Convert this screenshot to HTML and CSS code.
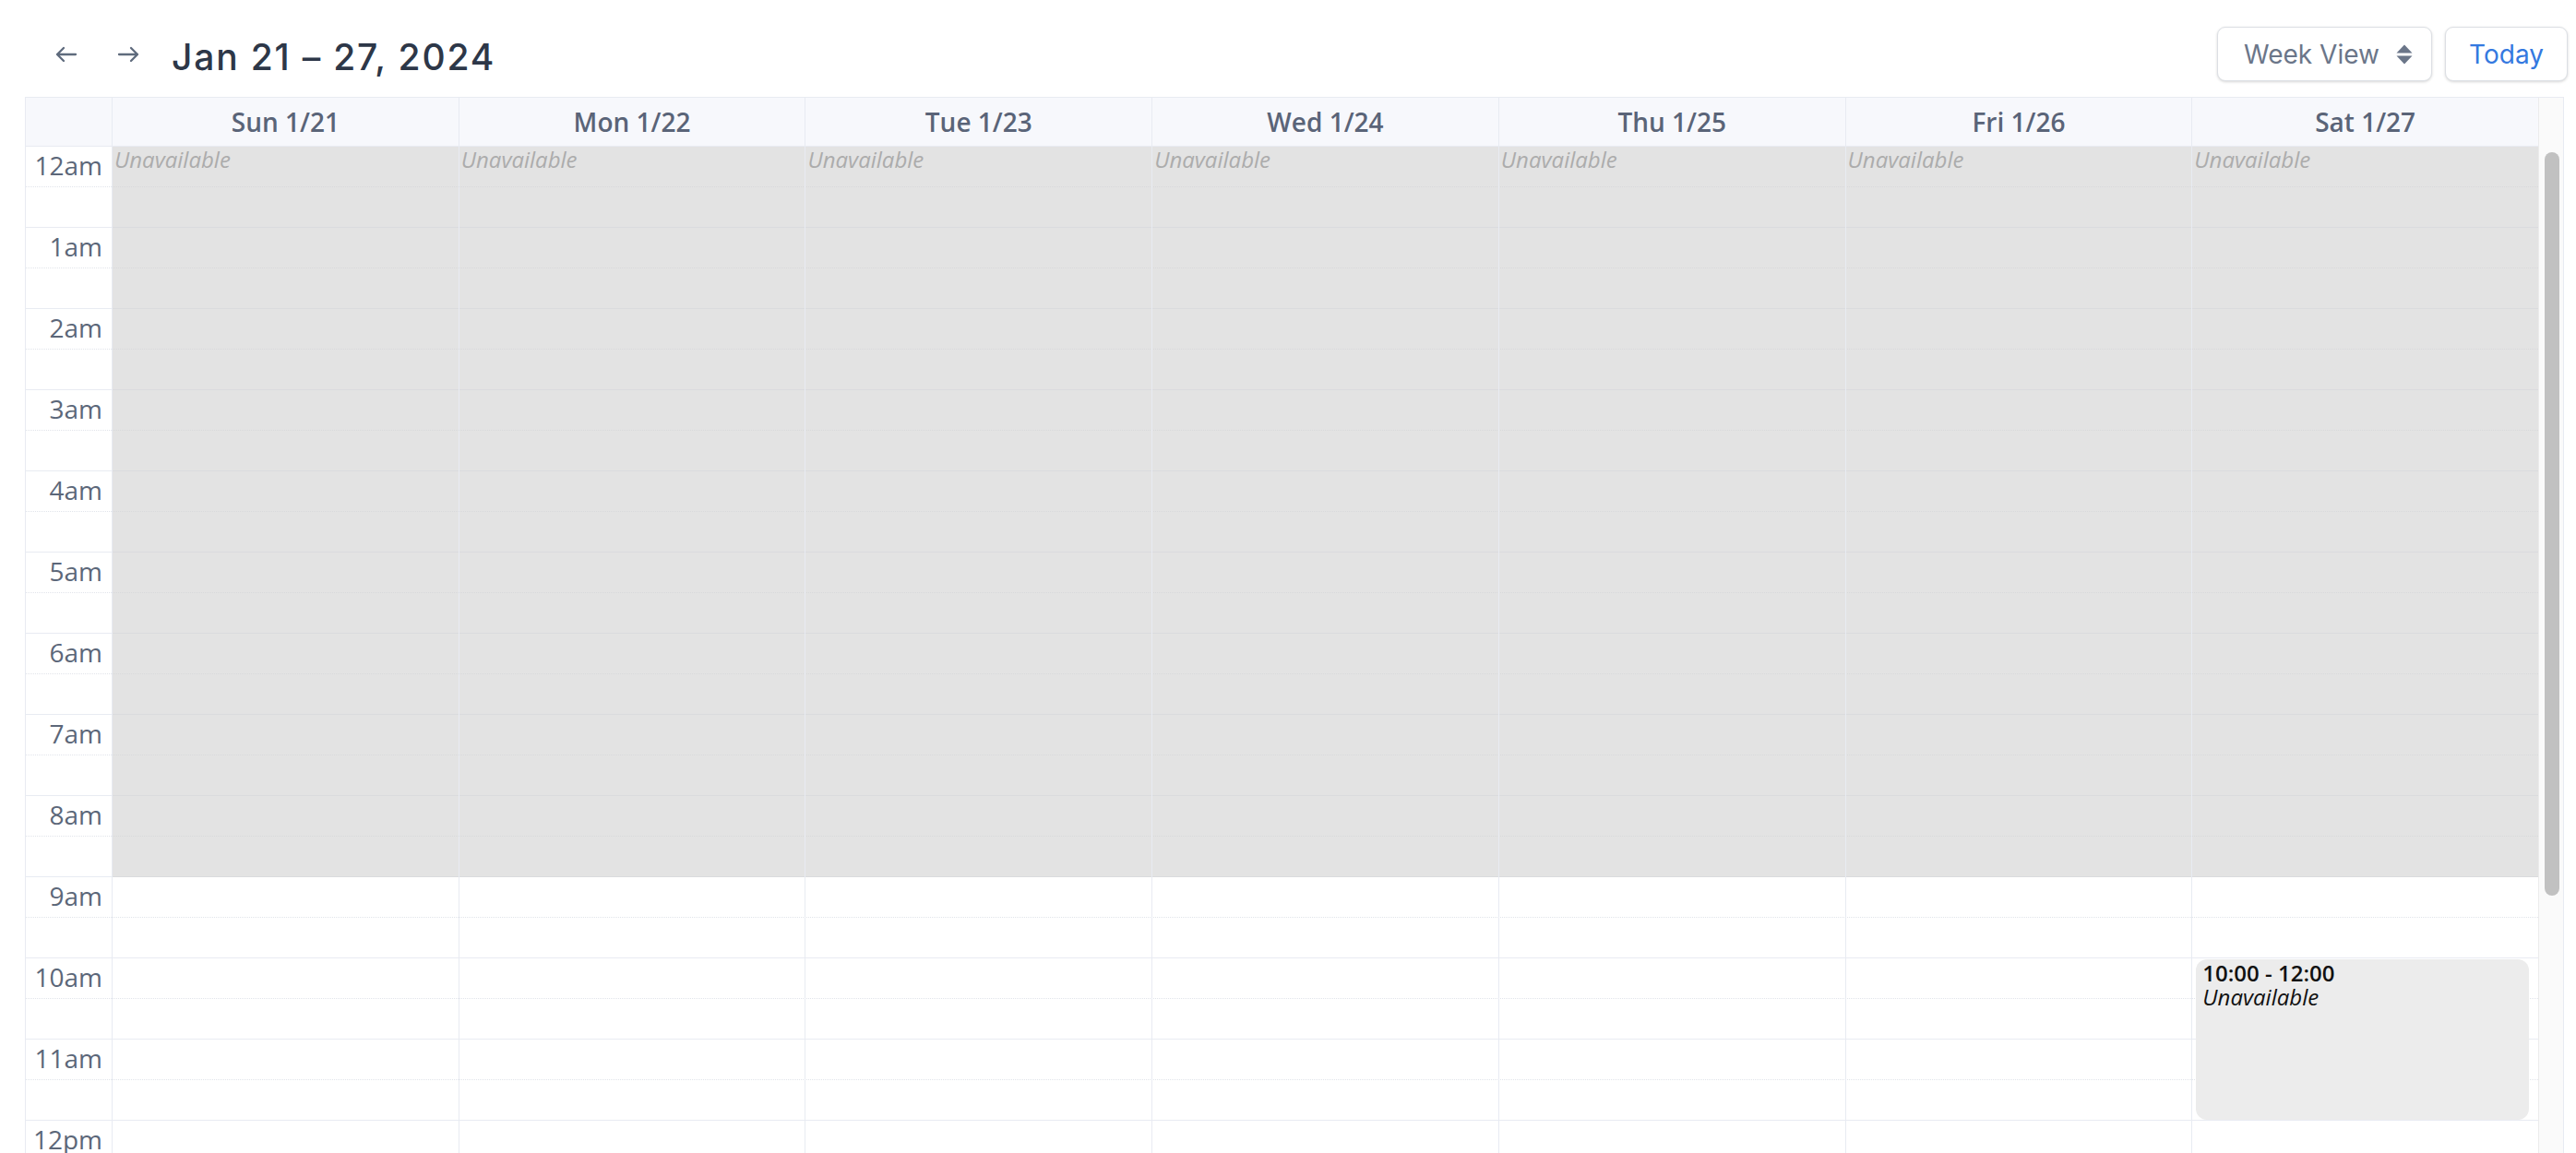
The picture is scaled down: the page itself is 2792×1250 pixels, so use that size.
FILE: index.html
```html
<!DOCTYPE html>
<html lang="en">
  <head>
    <meta charset="UTF-8" />
    <meta name="viewport" content="width=device-width, initial-scale=1.0" />
    <title>Availability – Week</title>
    <link rel="stylesheet" href="styles.css">
  </head>
  <body>
    <div class="page">
      <div class="toolbar">
        <button class="nav-btn" aria-label="Previous week">
          <svg width="26" height="20" viewBox="0 0 26 20"><path d="M23 10H3M10 3L3 10l7 7" /></svg>
        </button>
        <button class="nav-btn" aria-label="Next week">
          <svg width="26" height="20" viewBox="0 0 26 20"><path d="M3 10h20M16 3l7 7-7 7" /></svg>
        </button>
        <h1 class="title">Jan 21 – 27, 2024</h1>
        <div class="spacer"></div>
        <button class="btn view-select">
          Week View
          <svg width="18" height="22" viewBox="0 0 18 22"><path d="M9 0.5L17.5 9.5H0.5Z M0.5 12.5H17.5L9 21.5Z" /></svg>
        </button>
        <button class="btn today">Today</button>
      </div>

      <div class="calendar">
        <div class="cal-main">
          <div class="head-row">
            <div class="head-cell"></div>
            <div class="head-cell">Sun 1/21</div>
            <div class="head-cell">Mon 1/22</div>
            <div class="head-cell">Tue 1/23</div>
            <div class="head-cell">Wed 1/24</div>
            <div class="head-cell">Thu 1/25</div>
            <div class="head-cell">Fri 1/26</div>
            <div class="head-cell">Sat 1/27</div>
          </div>

          <div class="cal-body">
            <!-- hour slots, full width -->
            <div class="slots">
              <div class="hour"><div class="half"><span class="label">12am</span></div></div>
              <div class="hour"><div class="half"><span class="label">1am</span></div></div>
              <div class="hour"><div class="half"><span class="label">2am</span></div></div>
              <div class="hour"><div class="half"><span class="label">3am</span></div></div>
              <div class="hour"><div class="half"><span class="label">4am</span></div></div>
              <div class="hour"><div class="half"><span class="label">5am</span></div></div>
              <div class="hour"><div class="half"><span class="label">6am</span></div></div>
              <div class="hour"><div class="half"><span class="label">7am</span></div></div>
              <div class="hour"><div class="half"><span class="label">8am</span></div></div>
              <div class="hour"><div class="half"><span class="label">9am</span></div></div>
              <div class="hour"><div class="half"><span class="label">10am</span></div></div>
              <div class="hour"><div class="half"><span class="label">11am</span></div></div>
              <div class="hour"><div class="half"><span class="label">12pm</span></div></div>
            </div>

            <!-- unavailable background blocks -->
            <div class="bg-event d1">Unavailable</div>
            <div class="bg-event d2">Unavailable</div>
            <div class="bg-event d3">Unavailable</div>
            <div class="bg-event d4">Unavailable</div>
            <div class="bg-event d5">Unavailable</div>
            <div class="bg-event d6">Unavailable</div>
            <div class="bg-event d7">Unavailable</div>

            <!-- day columns -->
            <div class="day d1"></div>
            <div class="day d2"></div>
            <div class="day d3"></div>
            <div class="day d4"></div>
            <div class="day d5"></div>
            <div class="day d6"></div>
            <div class="day d7"></div>

            <div class="event d7">
              <div class="event-time">10:00 - 12:00</div>
              <div class="event-title">Unavailable</div>
            </div>
          </div>
        </div>

        <div class="scrollbar">
          <div class="thumb"></div>
        </div>
      </div>
    </div>
  </body>
</html>
```

FILE: styles.css
```css
html,
body {
  margin: 0;
  height: 100%;
  overflow: hidden;
  background: #fff;
}
body {
  font-family: "Open Sans", "Liberation Sans", sans-serif;
}
.page {
  height: 100vh;
  padding: 0 13px 0 27px;
  box-sizing: border-box;
  display: flex;
  flex-direction: column;
}

/* toolbar */
.toolbar {
  display: flex;
  align-items: center;
  height: 59px;
  margin-top: 29px;
  margin-bottom: 17px;
  margin-right: -4px;
}
.nav-btn {
  border: none;
  background: none;
  padding: 0;
  width: 26px;
  height: 20px;
  margin-left: 32px;
  cursor: pointer;
}
.nav-btn + .nav-btn {
  margin-left: 41px;
}
.nav-btn svg {
  display: block;
  fill: none;
  stroke: #5f6b7d;
  stroke-width: 2.3;
  stroke-linecap: round;
  stroke-linejoin: round;
}
.title {
  font-family: Inter, "Liberation Sans", sans-serif;
  font-size: 39px;
  font-weight: 500;
  color: #2d3748;
  margin: 6px 0 0 34px;
  letter-spacing: 1.8px;
}
.spacer {
  flex: 1;
}
.btn {
  font-family: Inter, "Liberation Sans", sans-serif;
  font-size: 28px;
  height: 59px;
  background: #fff;
  border: 1px solid #dcdfe4;
  border-radius: 9px;
  box-shadow: 0 1px 3px rgba(0, 0, 0, 0.16);
  box-sizing: border-box;
  cursor: pointer;
}
.view-select {
  width: 233px;
  color: #6b7689;
  display: flex;
  align-items: center;
  padding: 0 0 0 28px;
  gap: 18px;
}
.view-select svg {
  fill: #6b7689;
}
.today {
  width: 133px;
  margin-left: 14px;
  color: #3479e0;
}

/* calendar */
.calendar {
  flex: 1;
  min-height: 0;
  display: flex;
  border: 1px solid #e8ebf2;
  border-bottom: none;
  overflow: hidden;
}
.cal-main {
  flex: 1;
  min-width: 0;
}
.head-row,
.cal-body {
  display: grid;
  grid-template-columns: 93px repeat(7, 1fr);
}
.head-row {
  height: 52px;
  background: #f7f8fc;
  border-bottom: 1px solid #e8ebf2;
}
.head-cell {
  display: flex;
  align-items: center;
  justify-content: center;
  border-left: 1px solid #e8ebf2;
  font-size: 28px;
  font-weight: 600;
  color: #5a6478;
}
.head-cell:first-child {
  border-left: none;
}

.cal-body {
  grid-template-rows: repeat(26, 44px);
}
.slots {
  grid-column: 1 / -1;
  grid-row: 1 / -1;
}
.hour {
  height: 88px;
  box-sizing: border-box;
  border-bottom: 1px solid #e8ebf2;
}
.half {
  height: 44px;
  box-sizing: border-box;
  border-bottom: 1px dotted #e1e4ea;
}
.label {
  display: block;
  width: 93px;
  box-sizing: border-box;
  padding: 1px 10px 0 0;
  text-align: right;
  font-size: 28px;
  color: #5c6779;
}

.d1 { grid-column: 2; }
.d2 { grid-column: 3; }
.d3 { grid-column: 4; }
.d4 { grid-column: 5; }
.d5 { grid-column: 6; }
.d6 { grid-column: 7; }
.d7 { grid-column: 8; }

.bg-event {
  grid-row: 1 / 19;
  background: rgba(210, 210, 210, 0.62);
  padding-left: 3px;
  font-size: 24px;
  font-style: italic;
  line-height: 1.2;
  color: #acacac;
}
.day {
  grid-row: 1 / -1;
  border-left: 1px solid #e8ebf2;
}
.event {
  grid-row: 21 / 25;
  margin: 1px 10px 1px 5px;
  padding: 2px 7px;
  background: #ececec;
  border-radius: 12px;
  color: #111;
  font-size: 24px;
  line-height: 26px;
}
.event-time {
  font-weight: 600;
}
.event-title {
  font-style: italic;
}

/* fake scrollbar */
.scrollbar {
  width: 27px;
  box-sizing: border-box;
  border-left: 1px solid #ececec;
  background: #fafafa;
  padding: 59px 0 0 6px;
}
.thumb {
  width: 16px;
  height: 806px;
  border-radius: 8px;
  background: #c1c1c1;
}
```
